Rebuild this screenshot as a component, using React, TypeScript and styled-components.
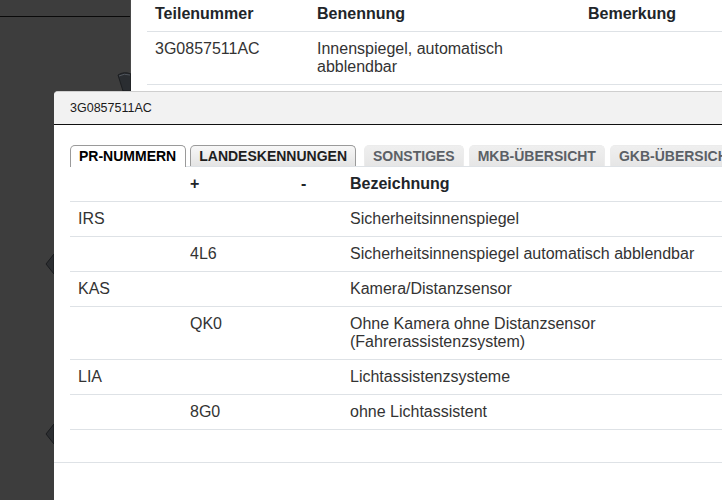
import styled, { createGlobalStyle } from 'styled-components';

const GlobalStyle = createGlobalStyle`
  html, body {
    margin: 0;
    padding: 0;
    background: #3d3d3d;
  }
  body {
    font-family: "Liberation Sans", Arial, sans-serif;
    color: #212529;
  }
`;

const partsRows = [
  { nr: '3G0857511AC', name: ['Innenspiegel, automatisch', 'abblendbar'], note: '' },
];

const prRows = [
  { family: 'IRS', plus: '', minus: '', text: 'Sicherheitsinnenspiegel' },
  { family: '', plus: '4L6', minus: '', text: 'Sicherheitsinnenspiegel automatisch abblendbar' },
  { family: 'KAS', plus: '', minus: '', text: 'Kamera/Distanzsensor' },
  { family: '', plus: 'QK0', minus: '', text: 'Ohne Kamera ohne Distanzsensor (Fahrerassistenzsystem)' },
  { family: 'LIA', plus: '', minus: '', text: 'Lichtassistenzsysteme' },
  { family: '', plus: '8G0', minus: '', text: 'ohne Lichtassistent' },
];

const tabs = [
  { label: 'PR-Nummern', kind: 'active' },
  { label: 'Landeskennungen', kind: 'bordered' },
  { label: 'Sonstiges', kind: 'plain' },
  { label: 'MKB-Übersicht', kind: 'plain' },
  { label: 'GKB-Übersicht', kind: 'plain' },
];

const App = () => {
  return (
    <>
      <GlobalStyle />
      <Page>
        <Sidebar>
          <TopBand />
        </Sidebar>
        <PartsPanel>
          <PartsTable>
            <colgroup>
              <col style={{ width: 162 }} />
              <col style={{ width: 271 }} />
              <col />
            </colgroup>
            <thead>
              <tr>
                <PartsHead>Teilenummer</PartsHead>
                <PartsHead>Benennung</PartsHead>
                <PartsHead>Bemerkung</PartsHead>
              </tr>
            </thead>
            <tbody>
              {partsRows.map((r) => (
                <tr key={r.nr}>
                  <PartsCell>{r.nr}</PartsCell>
                  <PartsCell>
                    {r.name[0]}
                    <br />
                    {r.name[1]}
                  </PartsCell>
                  <PartsCell>{r.note}</PartsCell>
                </tr>
              ))}
            </tbody>
          </PartsTable>
        </PartsPanel>

        <Cup width="14" height="19" viewBox="0 0 14 19">
          <path d="M1 3 Q7 -1 14 2 L14 19 L6 19 Z" fill="#2a2d31" stroke="#1c1e21" />
          <path d="M2 4 Q7 1 13 3" fill="none" stroke="#50555c" />
        </Cup>
        <Diamond $top={254} width="10" height="20" viewBox="0 0 10 20">
          <path d="M9 0 L1 10 L9 20 Z" fill="#2c2e31" stroke="#1b1c1e" />
        </Diamond>
        <Diamond $top={424} width="10" height="20" viewBox="0 0 10 20">
          <path d="M9 0 L1 10 L9 20 Z" fill="#2c2e31" stroke="#1b1c1e" />
        </Diamond>

        <Dialog>
          <DialogHeader>3G0857511AC</DialogHeader>
          <DialogBody>
            <TabBar>
              {tabs.map((t) => (
                <Tab key={t.label} $kind={t.kind}>
                  {t.label}
                </Tab>
              ))}
            </TabBar>
            <PrTable>
              <colgroup>
                <col style={{ width: 112 }} />
                <col style={{ width: 111 }} />
                <col style={{ width: 49 }} />
                <col />
              </colgroup>
              <thead>
                <tr>
                  <PrHead></PrHead>
                  <PrHead>+</PrHead>
                  <PrHead>-</PrHead>
                  <PrHead>Bezeichnung</PrHead>
                </tr>
              </thead>
              <tbody>
                {prRows.map((r, i) => (
                  <tr key={i}>
                    <PrCell>{r.family}</PrCell>
                    <PrCell>{r.plus}</PrCell>
                    <PrCell>{r.minus}</PrCell>
                    <PrCell>{r.text}</PrCell>
                  </tr>
                ))}
              </tbody>
            </PrTable>
          </DialogBody>
          <DialogFooter />
        </Dialog>
      </Page>
    </>
  );
};

const Page = styled.div`
  position: relative;
  width: 722px;
  height: 500px;
  overflow: hidden;
  background: #3d3d3d;
  display: grid;
  grid-template-columns: 131px 1fr;
  align-items: start;
`;

const Sidebar = styled.div`
  height: 500px;
  border-right: 1px solid #4a4a4a;
  box-sizing: border-box;
`;

const TopBand = styled.div`
  height: 16px;
  border-bottom: 1px solid #0a0a0a;
`;

const PartsPanel = styled.div`
  background: #fff;
  height: 500px;
  padding: 0 0 0 16px;
`;

const PartsTable = styled.table`
  width: 620px;
  border-collapse: collapse;
  margin-top: -3px;
  font-size: 16px;
  line-height: 18px;
`;

const PartsHead = styled.th`
  text-align: left;
  font-weight: bold;
  padding: 8px 8px;
  border-bottom: 1px solid #dee2e6;
  color: #212529;
`;

const PartsCell = styled.td`
  padding: 8px 8px;
  vertical-align: top;
  border-bottom: 1px solid #dee2e6;
  color: #333;
`;

const Cup = styled.svg`
  position: absolute;
  left: 117px;
  top: 72px;
`;

const Diamond = styled.svg<{ $top: number }>`
  position: absolute;
  left: 45px;
  top: ${(p) => p.$top}px;
`;

const Dialog = styled.div`
  position: absolute;
  left: 54px;
  top: 91px;
  width: 720px;
  height: 420px;
  background: #fff;
  border-top: 1px solid #cfcfcf;
  border-top-left-radius: 4px;
  display: flex;
  flex-direction: column;
`;

const DialogHeader = styled.div`
  height: 32px;
  line-height: 32px;
  padding-left: 16px;
  background: #f2f2f2;
  border-bottom: 1px solid #111;
  border-top-left-radius: 4px;
  font-size: 12.5px;
  color: #1a1a1a;
`;

const DialogBody = styled.div`
  padding: 20px 16px 0;
`;

const TabBar = styled.div`
  display: flex;
  align-items: flex-end;
  height: 21px;
`;

const Tab = styled.div<{ $kind: string }>`
  box-sizing: border-box;
  padding: ${(p) => (p.$kind === 'active' ? '1px 9px 0 8px' : '1px 8px 0 8px')};
  margin-right: ${(p) => (p.$kind === 'active' ? '4px' : p.$kind === 'bordered' ? '8px' : '5px')};
  font-size: 14px;
  font-weight: bold;
  line-height: 19px;
  text-transform: uppercase;
  white-space: nowrap;
  border-top-left-radius: 5px;
  border-top-right-radius: 5px;
  border: 1px solid
    ${(p) => (p.$kind === 'plain' ? '#ececec' : '#9a9a9a')};
  border-bottom: none;
  position: relative;
  z-index: 1;
  background: ${(p) =>
    p.$kind === 'active'
      ? '#fff'
      : p.$kind === 'bordered'
        ? 'linear-gradient(#f7f7f7, #e4e4e4)'
        : 'linear-gradient(#efefef, #e6e6e6)'};
  color: ${(p) => (p.$kind === 'active' ? '#000' : p.$kind === 'bordered' ? '#1e1e1e' : '#5b6066')};
  height: ${(p) => (p.$kind === 'active' ? '22px' : '21px')};
  margin-bottom: ${(p) => (p.$kind === 'active' ? '-1px' : '0')};
`;

const PrTable = styled.table`
  width: 700px;
  border-collapse: collapse;
  font-size: 16px;
  line-height: 18px;
`;

const PrHead = styled.th`
  text-align: left;
  font-weight: bold;
  padding: 8px;
  border-top: 1px solid #dee2e6;
  color: #212529;
`;

const PrCell = styled.td`
  padding: 8px;
  vertical-align: top;
  border-top: 1px solid #dee2e6;
  border-bottom: 1px solid #dee2e6;
  color: #333;
`;

const DialogFooter = styled.div`
  margin-top: 32px;
  border-top: 1px solid #dee2e6;
  flex: 1;
`;

export default App;
